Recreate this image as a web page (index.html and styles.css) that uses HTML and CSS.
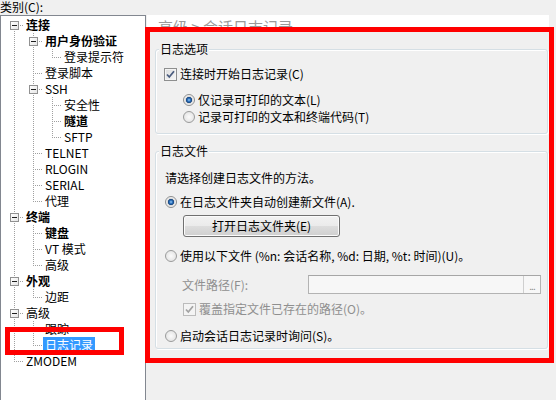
FILE: index.html
```html
<!DOCTYPE html>
<html lang="zh-CN">
<head>
<meta charset="utf-8">
<title>会话日志记录</title>
<link rel="stylesheet" href="styles.css">
</head>
<body>
<div class="cat-label">类别(C):</div>
<div class="main">
  <div class="tree">
    <div class="row"><span class="c f"><span class="box"><span class="minus"></span></span></span><span class="lbl b">连接</span></div>
    <div class="row"><span class="c v"></span><span class="c t"><span class="box"><span class="minus"></span></span></span><span class="lbl b">用户身份验证</span></div>
    <div class="row"><span class="c v"></span><span class="c v"></span><span class="c l"></span><span class="lbl">登录提示符</span></div>
    <div class="row"><span class="c v"></span><span class="c t"></span><span class="lbl">登录脚本</span></div>
    <div class="row"><span class="c v"></span><span class="c t"><span class="box"><span class="minus"></span></span></span><span class="lbl">SSH</span></div>
    <div class="row"><span class="c v"></span><span class="c v"></span><span class="c t"></span><span class="lbl">安全性</span></div>
    <div class="row"><span class="c v"></span><span class="c v"></span><span class="c t"></span><span class="lbl b">隧道</span></div>
    <div class="row"><span class="c v"></span><span class="c v"></span><span class="c l"></span><span class="lbl">SFTP</span></div>
    <div class="row"><span class="c v"></span><span class="c t"></span><span class="lbl">TELNET</span></div>
    <div class="row"><span class="c v"></span><span class="c t"></span><span class="lbl">RLOGIN</span></div>
    <div class="row"><span class="c v"></span><span class="c t"></span><span class="lbl">SERIAL</span></div>
    <div class="row"><span class="c v"></span><span class="c l"></span><span class="lbl">代理</span></div>
    <div class="row"><span class="c t"><span class="box"><span class="minus"></span></span></span><span class="lbl b">终端</span></div>
    <div class="row"><span class="c v"></span><span class="c t"></span><span class="lbl b">键盘</span></div>
    <div class="row"><span class="c v"></span><span class="c t"></span><span class="lbl">VT 模式</span></div>
    <div class="row"><span class="c v"></span><span class="c l"></span><span class="lbl">高级</span></div>
    <div class="row"><span class="c t"><span class="box"><span class="minus"></span></span></span><span class="lbl b">外观</span></div>
    <div class="row"><span class="c v"></span><span class="c l"></span><span class="lbl">边距</span></div>
    <div class="row"><span class="c t"><span class="box"><span class="minus"></span></span></span><span class="lbl">高级</span></div>
    <div class="row"><span class="c v"></span><span class="c t"></span><span class="lbl">跟踪</span></div>
    <div class="row"><span class="c v"></span><span class="c l"></span><span class="lbl sel">日志记录</span></div>
    <div class="row"><span class="c l"></span><span class="lbl">ZMODEM</span></div>
  </div>

  <div class="pane">
    <div class="pane-head">高级 &gt; 会话日志记录</div>

    <div class="group g1">
      <div class="legend">日志选项</div>
      <div class="opt chk-row">
        <span class="check"><svg width="11" height="11" viewBox="0 0 11 11"><path d="M2 5.5 L4.3 8 L9 2.3" fill="none" stroke="#4a5c7e" stroke-width="1.8"/></svg></span>
        <span class="txt">连接时开始日志记录(C)</span>
      </div>
      <div class="opt sub r1"><span class="radio on"></span><span class="txt">仅记录可打印的文本(L)</span></div>
      <div class="opt sub r2"><span class="radio"></span><span class="txt">记录可打印的文本和终端代码(T)</span></div>
    </div>

    <div class="group g2">
      <div class="legend">日志文件</div>
      <div class="opt desc">请选择创建日志文件的方法。</div>
      <div class="opt ra"><span class="radio on"></span><span class="txt">在日志文件夹自动创建新文件(A).</span></div>
      <div class="btn">打开日志文件夹(E)</div>
      <div class="opt ru"><span class="radio"></span><span class="txt">使用以下文件 (%n: 会话名称, %d: 日期, %t: 时间)(U)。</span></div>
      <div class="path-row">
        <span class="path-lbl">文件路径(F):</span>
        <span class="field"><span class="browse">...</span></span>
      </div>
      <div class="opt sub chk-o">
        <span class="check dis"><svg width="11" height="11" viewBox="0 0 11 11"><path d="M2 5.5 L4.3 8 L9 2.3" fill="none" stroke="#a3a3a3" stroke-width="1.8"/></svg></span>
        <span class="txt gray">覆盖指定文件已存在的路径(O)。</span>
      </div>
      <div class="opt rs"><span class="radio"></span><span class="txt">启动会话日志记录时询问(S)。</span></div>
    </div>
  </div>
</div>

<div class="mark mark-pane"></div>
<div class="mark mark-tree"></div>
</body>
</html>
```
FILE: styles.css
```css
html, body {
  margin: 0;
  padding: 0;
}

body {
  position: relative;
  width: 556px;
  height: 400px;
  overflow: hidden;
  background: #f0f0f0;
  color: #000;
  font-family: "Noto Sans CJK SC", "Liberation Sans", sans-serif;
  font-size: 12px;
  line-height: 16px;
}

.cat-label {
  height: 15px;
  line-height: 14px;
  white-space: nowrap;
}

.main {
  display: flex;
  align-items: flex-start;
  gap: 1px;
}

/* ---------- tree ---------- */
.tree {
  flex: none;
  width: 146px;
  height: 400px;
  box-sizing: border-box;
  border: 1px solid #828790;
  background: #fff;
  padding: 1px 0 0 4px;
  overflow: hidden;
}

.row {
  display: flex;
  height: 16px;
}

.c {
  flex: none;
  display: flex;
  width: 19px;
  height: 16px;
  background-repeat: no-repeat;
}

.c.v {
  background-image: repeating-linear-gradient(to bottom, #a0a0a0 0 1px, transparent 1px 2px);
  background-position: 9px 0;
  background-size: 1px 16px;
}

.c.t {
  background-image:
    repeating-linear-gradient(to bottom, #a0a0a0 0 1px, transparent 1px 2px),
    repeating-linear-gradient(to right, #a0a0a0 0 1px, transparent 1px 2px);
  background-position: 9px 0, 11px 8px;
  background-size: 1px 16px, 8px 1px;
}

.c.l {
  background-image:
    repeating-linear-gradient(to bottom, #a0a0a0 0 1px, transparent 1px 2px),
    repeating-linear-gradient(to right, #a0a0a0 0 1px, transparent 1px 2px);
  background-position: 9px 0, 11px 8px;
  background-size: 1px 9px, 8px 1px;
}

.c.f {
  background-image:
    repeating-linear-gradient(to bottom, #a0a0a0 0 1px, transparent 1px 2px),
    repeating-linear-gradient(to right, #a0a0a0 0 1px, transparent 1px 2px);
  background-position: 9px 8px, 11px 8px;
  background-size: 1px 8px, 8px 1px;
}

.box {
  display: flex;
  align-items: center;
  justify-content: center;
  width: 9px;
  height: 9px;
  margin: 4px 0 0 5px;
  box-sizing: border-box;
  border: 1px solid #919191;
  background: linear-gradient(135deg, #ffffff 0%, #e6e6e6 100%);
}

.minus {
  width: 5px;
  height: 1px;
  background: #1e1e1e;
}

.lbl {
  padding: 0 2px;
  height: 16px;
  line-height: 16px;
  white-space: nowrap;
}

.lbl.b {
  font-weight: bold;
}

.lbl.sel {
  background: #3399ff;
  color: #fff;
}

/* ---------- right pane ---------- */
.pane {
  flex: none;
  width: 402px;
}

.pane-head {
  height: 16px;
  box-sizing: border-box;
  padding: 4px 0 0 11px;
  background: #fff;
  color: #9a9a9a;
  font-size: 15px;
  line-height: 15px;
  white-space: nowrap;
  overflow: hidden;
}

.group {
  display: flex;
  flex-direction: column;
  align-items: flex-start;
  width: 393px;
  margin-left: 8px;
  box-sizing: border-box;
  border: 1px solid #d5dfe5;
  border-radius: 3px;
  box-shadow: inset 1px 1px 0 #fff, 1px 1px 0 #fff;
}

.g1 {
  margin-top: 18px;
  height: 85px;
}

.g2 {
  margin-top: 17px;
  height: 198px;
}

.legend {
  margin: -9px 0 0 3px;
  padding: 0 1px;
  height: 16px;
  line-height: 16px;
  background: #f0f0f0;
}

.opt {
  display: flex;
  align-items: center;
  height: 16px;
  white-space: nowrap;
}

.txt {
  margin-left: 3px;
}

.gray,
.path-lbl {
  color: #8f8f8f;
}

.chk-row { margin-top: 9px; margin-left: 8px; }
.r1 { margin-top: 10px; }
.r2 { margin-top: 1px; }
.sub { margin-left: 27px; }

.desc { margin-top: 11px; margin-left: 9px; }
.ra { margin-top: 8px; margin-left: 9px; }
.ru { margin-top: 11px; margin-left: 9px; }
.chk-o { margin-top: 7px; }
.rs { margin-top: 11px; margin-left: 9px; }

/* checkbox */
.check {
  flex: none;
  display: block;
  width: 13px;
  height: 13px;
  box-sizing: border-box;
  border: 1px solid #8e8f8f;
  background: linear-gradient(135deg, #dcdcdc 0%, #f7f7f7 100%);
  box-shadow: inset 0 0 0 1px #f4f4f4;
}

.check svg {
  display: block;
}

.check.dis {
  border-color: #bcbcbc;
  background: #f4f4f4;
}

/* radio */
.radio {
  flex: none;
  width: 12px;
  height: 12px;
  box-sizing: border-box;
  border: 1px solid #9a9b9b;
  border-radius: 50%;
  background: radial-gradient(circle at 50% 50%, #fbfbfb 0, #e6e6e6 5px);
}

.radio.on {
  border-color: #8e8f8f;
  background: radial-gradient(circle at 50% 50%, #9fd0f7 0, #2f74c0 1.5px, #17467f 2.8px, #d8d8d8 3.4px, #f6f6f6 5px);
}

/* button */
.btn {
  margin: 5px 0 0 27px;
  width: 157px;
  height: 22px;
  box-sizing: border-box;
  border: 1px solid #707070;
  border-radius: 3px;
  background: linear-gradient(to bottom, #f2f2f2 0%, #ebebeb 48%, #dddddd 52%, #cfcfcf 100%);
  box-shadow: inset 0 0 0 1px #fbfbfb;
  text-align: center;
  line-height: 20px;
  white-space: nowrap;
}

/* path field */
.path-row {
  display: flex;
  align-items: center;
  align-self: stretch;
  height: 19px;
  margin: 11px 6px 0 26px;
}

.path-lbl {
  flex: 1;
  white-space: nowrap;
}

.field {
  display: flex;
  justify-content: flex-end;
  width: 233px;
  height: 19px;
  box-sizing: border-box;
  border: 1px solid #b3b3b3;
  border-top-color: #a6a6a6;
  background: #f7f7f7;
}

.browse {
  width: 16px;
  border-left: 1px solid #cfcfcf;
  color: #8a8a8a;
  font-size: 10px;
  line-height: 20px;
  text-align: center;
  letter-spacing: -1px;
}

/* red annotation frames drawn over the screenshot */
.mark {
  position: absolute;
  box-sizing: border-box;
  border: 5px solid #ff0000;
}

.mark-pane {
  left: 145px;
  top: 27px;
  width: 409px;
  height: 336px;
}

.mark-tree {
  left: 5px;
  top: 327px;
  width: 119px;
  height: 28px;
}
```
